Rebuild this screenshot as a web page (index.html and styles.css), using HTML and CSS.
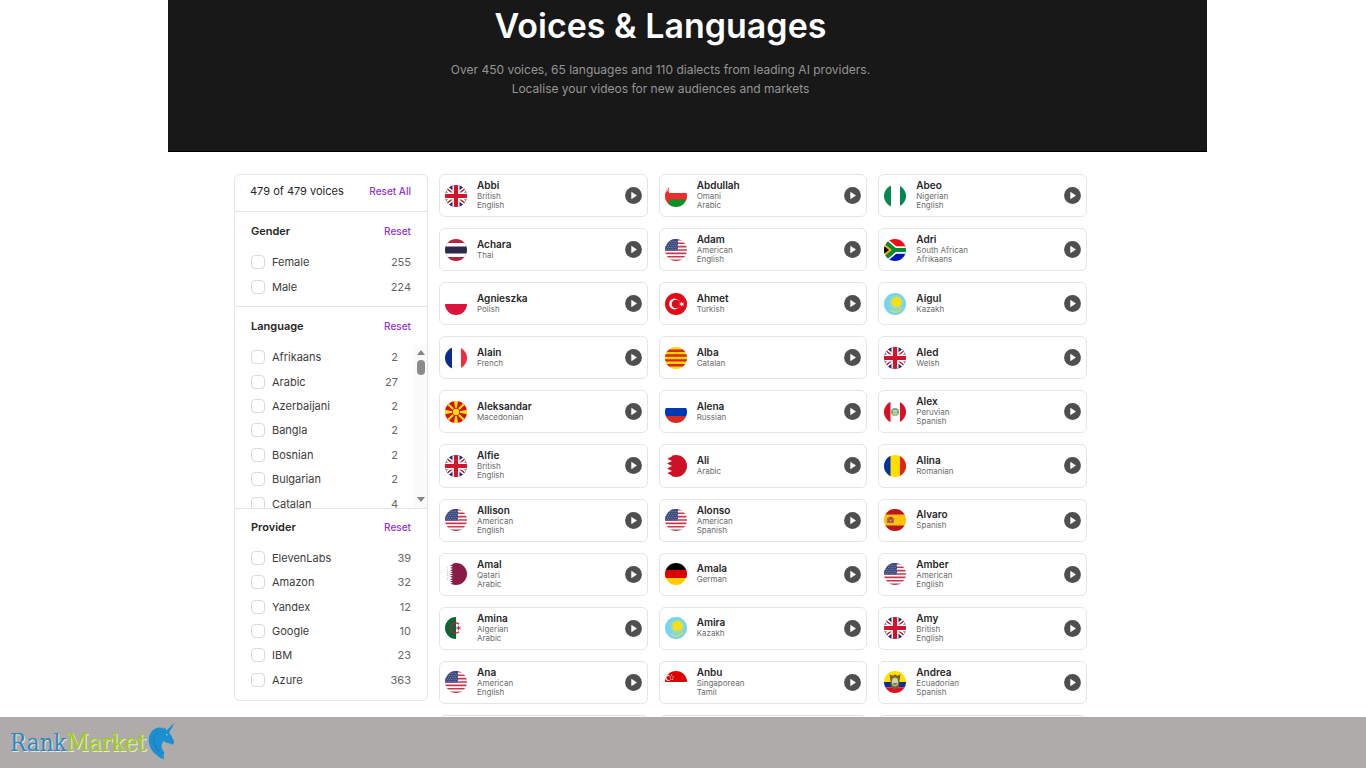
FILE: index.html
```html
<!DOCTYPE html>
<html lang="en">
<head>
<meta charset="utf-8">
<title>Voices &amp; Languages</title>
<link rel="stylesheet" href="styles.css">
</head>
<body>
<svg class="sprite" aria-hidden="true">
  <symbol id="play" viewBox="0 0 17 17"><circle cx="8.500" cy="8.500" r="8.400" fill="#4f4f4f"/><path d="M6.600 5.300v6.400l4.900-3.200z" fill="#fff" stroke="#fff" stroke-width=".6" stroke-linejoin="round"/></symbol>
  <symbol id="gb" viewBox="0 0 22 22"><path fill="#1b2c6b" d="M0 0h22v22H0z"/><path d="M-4 -1 26 23M26 -1-4 23" stroke="#fff" stroke-width="4.600"/><path d="M-4 -1 26 23M26 -1-4 23" stroke="#cf142b" stroke-width="1.400"/><path d="M11 0v22M0 11h22" stroke="#fff" stroke-width="7"/><path d="M11 0v22M0 11h22" stroke="#cf142b" stroke-width="4.200"/></symbol>
  <symbol id="us" viewBox="0 0 22 22"><path fill="#fff" d="M0 0h22v22H0z"/><path d="M0 .8h22M0 4.200h22M0 7.600h22M0 11h22M0 14.400h22M0 17.800h22M0 21.200h22" stroke="#c8394c" stroke-width="1.600"/><path fill="#3c4b80" d="M0 0h13v11.500H0z"/><path d="M1 2.500h12M2 4.500h11M1 6.500h12M2 8.500h11M1 10.300h12" stroke="#a9b2cf" stroke-width=".7" stroke-dasharray=".8 1.400"/></symbol>
  <symbol id="om" viewBox="0 0 22 22"><path fill="#fff" d="M0 0h22v8H0z"/><path fill="#ef2b2d" d="M0 0h4v8h18v7H0z"/><path fill="#0b9226" d="M4 14.500h18V22H4z"/><path fill="#ef2b2d" d="M0 14h4v8H0z"/><path d="M1.500 4l2 2.500m0-2.500l-2 2.500" stroke="#fff" stroke-width=".8"/></symbol>
  <symbol id="ng" viewBox="0 0 22 22"><path fill="#fff" d="M0 0h22v22H0z"/><path fill="#008850" d="M0 0h7v22H0zM16 0h6v22h-6z"/></symbol>
  <symbol id="th" viewBox="0 0 22 22"><path fill="#b52540" d="M0 0h22v22H0z"/><path fill="#fff" d="M0 4h22v14H0z"/><path fill="#2d2a4a" d="M0 7.500h22v7H0z"/></symbol>
  <symbol id="za" viewBox="0 0 22 22"><path fill="#f00c14" d="M0 0h22v11H0z"/><path fill="#0018b8" d="M0 11h22v11H0z"/><path d="M-1 1 11 11h12M-1 21l12-10" fill="none" stroke="#fff" stroke-width="7.400"/><path fill="#ffb612" d="M0 4l8.500 7L0 18z"/><path d="M-1 1 11 11h12M-1 21l12-10" fill="none" stroke="#078930" stroke-width="4.200"/><path fill="#000" d="M0 7l5 4-5 4z"/></symbol>
  <symbol id="pl" viewBox="0 0 22 22"><path fill="#fff" d="M0 0h22v11H0z"/><path fill="#dc143c" d="M0 11h22v11H0z"/></symbol>
  <symbol id="tr" viewBox="0 0 22 22"><path fill="#e30a17" d="M0 0h22v22H0z"/><circle cx="9.500" cy="11" r="5.400" fill="#fff"/><circle cx="10.900" cy="11" r="4.300" fill="#e30a17"/><path fill="#fff" d="M14 11l1.800-.7.100-1.900 1.300 1.500 1.900-.5-1 1.600 1 1.600-1.900-.4-1.300 1.400-.1-1.900z"/></symbol>
  <symbol id="kz" viewBox="0 0 22 22"><path fill="#76d3f1" d="M0 0h22v22H0z"/><circle cx="12.500" cy="9.500" r="7" fill="#b3e08d" opacity=".6"/><path d="M6 17c4 3 9 2.500 12-2" stroke="#c4dd6b" stroke-width="2" fill="none"/><circle cx="12.500" cy="9" r="5" fill="#f8df10"/></symbol>
  <symbol id="fr" viewBox="0 0 22 22"><path fill="#fff" d="M0 0h22v22H0z"/><path fill="#0a2c8b" d="M0 0h7v22H0z"/><path fill="#f02c3c" d="M16 0h6v22h-6z"/></symbol>
  <symbol id="ct" viewBox="0 0 22 22"><path fill="#ffd500" d="M0 0h22v22H0z"/><path d="M0 3.700h22M0 8.500h22M0 13.400h22M0 18.300h22" stroke="#da251d" stroke-width="2.400"/></symbol>
  <symbol id="mk" viewBox="0 0 22 22"><path fill="#d8100b" d="M0 0h22v22H0z"/><path fill="#ffde12" d="M8.800 0h4.400L11 11zM8.800 22h4.400L11 11zM0 8.800v4.400L11 11zM22 8.800v4.400L11 11z"/><path d="M3 3l16 16M19 3 3 19" stroke="#ffde12" stroke-width="2.200"/><circle cx="11" cy="11" r="4" fill="#d8100b"/><circle cx="11" cy="11" r="3.200" fill="#ffde12"/></symbol>
  <symbol id="ru" viewBox="0 0 22 22"><path fill="#fff" d="M0 0h22v7H0z"/><path fill="#0039b5" d="M0 7h22v8H0z"/><path fill="#d52b1e" d="M0 15h22v7H0z"/></symbol>
  <symbol id="pe" viewBox="0 0 22 22"><path fill="#fff" d="M0 0h22v22H0z"/><path fill="#d91023" d="M0 0h6.500v22H0zM16 0h6v22h-6z"/><circle cx="11" cy="11" r="4" fill="#78a978"/><path fill="#d8c66d" d="M8 12h6l-2 2.500h-2z"/><path fill="#a5d7da" d="M9 9h4v2.500H9z"/></symbol>
  <symbol id="bh" viewBox="0 0 22 22"><path fill="#fff" d="M0 0h22v22H0z"/><path fill="#ce1126" d="M5 0h17v22H5l2-1.500-5-2.300L7 16l-5-2.500L7 11 2 8.600 7 6 2 3.700 7 1.500z"/></symbol>
  <symbol id="ro" viewBox="0 0 22 22"><path fill="#ffde00" d="M0 0h22v22H0z"/><path fill="#0033a4" d="M0 0h6.500v22H0z"/><path fill="#df2418" d="M16 0h6v22h-6z"/></symbol>
  <symbol id="es" viewBox="0 0 22 22"><path fill="#fcbf0c" d="M0 0h22v22H0z"/><path fill="#b91420" d="M0 0h22v5.500H0zM0 16.500h22V22H0z"/><path fill="#b86d38" d="M3 9h7v5H3z"/><circle cx="6.500" cy="11.500" r="2.200" fill="#a4483a"/><path d="M4.500 8.500h4" stroke="#ad3a20"/><circle cx="6.500" cy="11.600" r="1" fill="#d7a3a0"/></symbol>
  <symbol id="qa" viewBox="0 0 22 22"><path fill="#fff" d="M0 0h22v22H0z"/><path fill="#8a1b46" d="M8 0h14v22H8L5 21l3-1.200-3-1.200 3-1.200-3-1.200 3-1.200-3-1.200 3-1.200-3-1.200 3-1.200-3-1.200L8 8.500 5 7.300 8 6.100 5 4.900 8 3.700 5 2.500 8 1.300z"/><path d="M2.500 4v14" stroke="#d9c3cc" stroke-width="1" stroke-dasharray="1 1"/></symbol>
  <symbol id="de" viewBox="0 0 22 22"><path d="M0 0h22v7H0z"/><path fill="#dd0000" d="M0 7h22v8H0z"/><path fill="#ffce00" d="M0 15h22v7H0z"/></symbol>
  <symbol id="dz" viewBox="0 0 22 22"><path fill="#fff" d="M0 0h22v22H0z"/><path fill="#046835" d="M0 0h11v22H0z"/><path d="M14 7.200a5 5 0 1 0 0 7.600" fill="none" stroke="#d21034" stroke-width="1.300"/><path d="M11 11h5M13.500 8.800v4.400M12 9.500l3 3m0-3l-3 3" stroke="#d21034" stroke-width=".8"/></symbol>
  <symbol id="sg" viewBox="0 0 22 22"><path fill="#fff" d="M0 0h22v22H0z"/><path fill="#df0000" d="M0 0h22v11H0z"/><path d="M4.500 4.500a2.600 2.600 0 1 0 0 4.800" fill="none" stroke="#fff" stroke-width="1.200"/><path d="M6 4h1.200M4.700 6h1.200M7.400 6h1.200M5.200 8.200h1.200M7 8.200h1.200" stroke="#fff"/></symbol>
  <symbol id="ec" viewBox="0 0 22 22"><path fill="#ffe000" d="M0 0h22v11H0z"/><path fill="#0f2c91" d="M0 11h22v5.500H0z"/><path fill="#e01020" d="M0 16.500h22V22H0z"/><path d="M5.500 3.500 9 4.800l2-1.600 2 1.600 3.500-1.300-1 6-.5 6.500-4 2.500-4-2.500-.5-6.500z" fill="#76603a"/><ellipse cx="11" cy="11" rx="3.200" ry="4.400" fill="#e0c35a"/><ellipse cx="11" cy="11" rx="2.500" ry="3.600" fill="#b5dbe0"/><path fill="#6c8b45" d="M8.700 12h4.600l-1 2.200H9.800z"/><circle cx="11" cy="9" r="1" fill="#f5d64e"/></symbol>
</svg>
<main class="page">
  <header class="hero">
    <h1>Voices &amp; Languages</h1>
    <p>Over 450 voices, 65 languages and 110 dialects from leading AI providers.<br>Localise your videos for new audiences and markets</p>
  </header>
  <div class="content">
    <aside class="filters">
      <div class="summary"><span>479 of 479 voices</span><button class="reset">Reset All</button></div>
      <section class="group">
        <div class="group-head"><h2>Gender</h2><button class="reset">Reset</button></div>
        <ul class="options two">
          <li><label><input type="checkbox">Female</label><span>255</span></li>
          <li><label><input type="checkbox">Male</label><span>224</span></li>
        </ul>
      </section>
      <section class="group languages">
        <div class="group-head"><h2>Language</h2><button class="reset">Reset</button></div>
        <div class="scroller">
          <ul class="options seven">
            <li><label><input type="checkbox">Afrikaans</label><span>2</span></li>
            <li><label><input type="checkbox">Arabic</label><span>27</span></li>
            <li><label><input type="checkbox">Azerbaijani</label><span>2</span></li>
            <li><label><input type="checkbox">Bangla</label><span>2</span></li>
            <li><label><input type="checkbox">Bosnian</label><span>2</span></li>
            <li><label><input type="checkbox">Bulgarian</label><span>2</span></li>
            <li><label><input type="checkbox">Catalan</label><span>4</span></li>
          </ul>
          <div class="scrollbar" aria-hidden="true">
            <svg width="8" height="5" viewBox="0 0 8 5"><path fill="#858585" d="M4 0l4 5H0z"/></svg>
            <div class="thumb"></div>
            <svg width="8" height="5" viewBox="0 0 8 5"><path fill="#858585" d="M4 5l4-5H0z"/></svg>
          </div>
        </div>
      </section>
      <section class="group providers">
        <div class="group-head"><h2>Provider</h2><button class="reset">Reset</button></div>
        <ul class="options six">
          <li><label><input type="checkbox">ElevenLabs</label><span>39</span></li>
          <li><label><input type="checkbox">Amazon</label><span>32</span></li>
          <li><label><input type="checkbox">Yandex</label><span>12</span></li>
          <li><label><input type="checkbox">Google</label><span>10</span></li>
          <li><label><input type="checkbox">IBM</label><span>23</span></li>
          <li><label><input type="checkbox">Azure</label><span>363</span></li>
        </ul>
      </section>
    </aside>
    <ul class="voices">
      <li class="voice"><svg class="flag"><use href="#gb"/></svg><div class="info"><h3>Abbi</h3><p>British</p><p>English</p></div><button class="play" aria-label="Play Abbi"><svg><use href="#play"/></svg></button></li>
      <li class="voice"><svg class="flag"><use href="#om"/></svg><div class="info"><h3>Abdullah</h3><p>Omani</p><p>Arabic</p></div><button class="play" aria-label="Play Abdullah"><svg><use href="#play"/></svg></button></li>
      <li class="voice"><svg class="flag"><use href="#ng"/></svg><div class="info"><h3>Abeo</h3><p>Nigerian</p><p>English</p></div><button class="play" aria-label="Play Abeo"><svg><use href="#play"/></svg></button></li>
      <li class="voice"><svg class="flag"><use href="#th"/></svg><div class="info"><h3>Achara</h3><p>Thai</p></div><button class="play" aria-label="Play Achara"><svg><use href="#play"/></svg></button></li>
      <li class="voice"><svg class="flag"><use href="#us"/></svg><div class="info"><h3>Adam</h3><p>American</p><p>English</p></div><button class="play" aria-label="Play Adam"><svg><use href="#play"/></svg></button></li>
      <li class="voice"><svg class="flag"><use href="#za"/></svg><div class="info"><h3>Adri</h3><p>South African</p><p>Afrikaans</p></div><button class="play" aria-label="Play Adri"><svg><use href="#play"/></svg></button></li>
      <li class="voice"><svg class="flag"><use href="#pl"/></svg><div class="info"><h3>Agnieszka</h3><p>Polish</p></div><button class="play" aria-label="Play Agnieszka"><svg><use href="#play"/></svg></button></li>
      <li class="voice"><svg class="flag"><use href="#tr"/></svg><div class="info"><h3>Ahmet</h3><p>Turkish</p></div><button class="play" aria-label="Play Ahmet"><svg><use href="#play"/></svg></button></li>
      <li class="voice"><svg class="flag"><use href="#kz"/></svg><div class="info"><h3>Aigul</h3><p>Kazakh</p></div><button class="play" aria-label="Play Aigul"><svg><use href="#play"/></svg></button></li>
      <li class="voice"><svg class="flag"><use href="#fr"/></svg><div class="info"><h3>Alain</h3><p>French</p></div><button class="play" aria-label="Play Alain"><svg><use href="#play"/></svg></button></li>
      <li class="voice"><svg class="flag"><use href="#ct"/></svg><div class="info"><h3>Alba</h3><p>Catalan</p></div><button class="play" aria-label="Play Alba"><svg><use href="#play"/></svg></button></li>
      <li class="voice"><svg class="flag"><use href="#gb"/></svg><div class="info"><h3>Aled</h3><p>Welsh</p></div><button class="play" aria-label="Play Aled"><svg><use href="#play"/></svg></button></li>
      <li class="voice"><svg class="flag"><use href="#mk"/></svg><div class="info"><h3>Aleksandar</h3><p>Macedonian</p></div><button class="play" aria-label="Play Aleksandar"><svg><use href="#play"/></svg></button></li>
      <li class="voice"><svg class="flag"><use href="#ru"/></svg><div class="info"><h3>Alena</h3><p>Russian</p></div><button class="play" aria-label="Play Alena"><svg><use href="#play"/></svg></button></li>
      <li class="voice"><svg class="flag"><use href="#pe"/></svg><div class="info"><h3>Alex</h3><p>Peruvian</p><p>Spanish</p></div><button class="play" aria-label="Play Alex"><svg><use href="#play"/></svg></button></li>
      <li class="voice"><svg class="flag"><use href="#gb"/></svg><div class="info"><h3>Alfie</h3><p>British</p><p>English</p></div><button class="play" aria-label="Play Alfie"><svg><use href="#play"/></svg></button></li>
      <li class="voice"><svg class="flag"><use href="#bh"/></svg><div class="info"><h3>Ali</h3><p>Arabic</p></div><button class="play" aria-label="Play Ali"><svg><use href="#play"/></svg></button></li>
      <li class="voice"><svg class="flag"><use href="#ro"/></svg><div class="info"><h3>Alina</h3><p>Romanian</p></div><button class="play" aria-label="Play Alina"><svg><use href="#play"/></svg></button></li>
      <li class="voice"><svg class="flag"><use href="#us"/></svg><div class="info"><h3>Allison</h3><p>American</p><p>English</p></div><button class="play" aria-label="Play Allison"><svg><use href="#play"/></svg></button></li>
      <li class="voice"><svg class="flag"><use href="#us"/></svg><div class="info"><h3>Alonso</h3><p>American</p><p>Spanish</p></div><button class="play" aria-label="Play Alonso"><svg><use href="#play"/></svg></button></li>
      <li class="voice"><svg class="flag"><use href="#es"/></svg><div class="info"><h3>Alvaro</h3><p>Spanish</p></div><button class="play" aria-label="Play Alvaro"><svg><use href="#play"/></svg></button></li>
      <li class="voice"><svg class="flag"><use href="#qa"/></svg><div class="info"><h3>Amal</h3><p>Qatari</p><p>Arabic</p></div><button class="play" aria-label="Play Amal"><svg><use href="#play"/></svg></button></li>
      <li class="voice"><svg class="flag"><use href="#de"/></svg><div class="info"><h3>Amala</h3><p>German</p></div><button class="play" aria-label="Play Amala"><svg><use href="#play"/></svg></button></li>
      <li class="voice"><svg class="flag"><use href="#us"/></svg><div class="info"><h3>Amber</h3><p>American</p><p>English</p></div><button class="play" aria-label="Play Amber"><svg><use href="#play"/></svg></button></li>
      <li class="voice"><svg class="flag"><use href="#dz"/></svg><div class="info"><h3>Amina</h3><p>Algerian</p><p>Arabic</p></div><button class="play" aria-label="Play Amina"><svg><use href="#play"/></svg></button></li>
      <li class="voice"><svg class="flag"><use href="#kz"/></svg><div class="info"><h3>Amira</h3><p>Kazakh</p></div><button class="play" aria-label="Play Amira"><svg><use href="#play"/></svg></button></li>
      <li class="voice"><svg class="flag"><use href="#gb"/></svg><div class="info"><h3>Amy</h3><p>British</p><p>English</p></div><button class="play" aria-label="Play Amy"><svg><use href="#play"/></svg></button></li>
      <li class="voice"><svg class="flag"><use href="#us"/></svg><div class="info"><h3>Ana</h3><p>American</p><p>English</p></div><button class="play" aria-label="Play Ana"><svg><use href="#play"/></svg></button></li>
      <li class="voice"><svg class="flag"><use href="#sg"/></svg><div class="info"><h3>Anbu</h3><p>Singaporean</p><p>Tamil</p></div><button class="play" aria-label="Play Anbu"><svg><use href="#play"/></svg></button></li>
      <li class="voice"><svg class="flag"><use href="#ec"/></svg><div class="info"><h3>Andrea</h3><p>Ecuadorian</p><p>Spanish</p></div><button class="play" aria-label="Play Andrea"><svg><use href="#play"/></svg></button></li>
      <li class="voice"></li>
      <li class="voice"></li>
      <li class="voice"></li>
    </ul>
  </div>
</main>
<footer class="brand-bar">
  <a class="brand" href="#"><span class="rank">Rank</span><span class="market">Market</span><svg class="unicorn" viewBox="430 32 90 123" aria-hidden="true"><path fill="#1b8fd0" d="M514 37 497 68Q505 77 509 88Q515 96 510 102Q505 107 499 101Q488 99 481 94Q472 100 474 114Q476 123 482 128Q478 138 482 150Q470 149 461 139Q441 124 436 104Q431 84 439 71Q447 55 465 52Q473 51 480 56L484 52 488 61z"/><path d="M462 67Q447 78 450 96Q453 115 466 126" fill="none" stroke="#1879bb" stroke-width="3"/><circle cx="490" cy="74" r="2" fill="#d5e5ee"/></svg></a>
</footer>
</body>
</html>
```
FILE: styles.css
```css
* { box-sizing: border-box; margin: 0; padding: 0; }

body {
  display: flex;
  flex-direction: column;
  height: 100vh;
  overflow: hidden;
  background: #fff;
  color: #262626;
  font-family: Inter, "Liberation Sans", sans-serif;
  font-size: 11px;
}

ul { list-style: none; }
button { border: 0; background: none; font: inherit; cursor: pointer; }
.sprite { display: none; }

.page {
  flex: 1;
  min-height: 0;
  overflow: hidden;
  margin: 0 159px 0 168px;
}

.hero {
  padding: 4px 54px 53px 0;
  border-bottom: 1px solid #000;
  background: #181818;
  text-align: center;
}
.hero h1 { color: #fff; font-size: 34px; font-weight: 600; line-height: 44px; }
.hero p { margin-top: 12px; color: #959595; font-size: 12px; line-height: 19px; }

.content {
  display: flex;
  align-items: flex-start;
  gap: 11px;
  padding: 22px 120px 0 66px;
}

.filters {
  flex: 0 0 194px;
  border: 1px solid #e5e5e5;
  border-radius: 6px;
}
.summary {
  display: flex;
  justify-content: space-between;
  align-items: center;
  padding: 8px 16px 12px 15px;
  line-height: 16px;
}
.reset { color: #9333d6; font-size: 10px; font-weight: 500; line-height: 14px; }
.group { padding: 12px 0 7px; border-top: 1px solid #e5e5e5; }
.group-head {
  display: flex;
  justify-content: space-between;
  align-items: center;
  margin-bottom: 12px;
  padding: 0 16px;
  line-height: 14px;
}
.group-head h2 { font-size: 11px; font-weight: 600; }

.options { display: grid; flex: 1; padding: 0 16px; }
.options li { display: flex; justify-content: space-between; align-items: center; color: #666; }
.options label { display: flex; align-items: center; gap: 7px; color: #3c3c3c; }
.options input {
  appearance: none;
  width: 14px;
  height: 14px;
  border: 1px solid #dadada;
  border-radius: 4px;
  background: #fff;
}
.two { min-height: 49px; }
.six { min-height: 146px; }
.seven { min-height: 171px; }

.languages { padding-bottom: 0; }
.providers { padding: 11px 0 8px; }
.scroller { display: flex; height: 163px; overflow: hidden; }
.scrollbar {
  display: flex;
  flex-direction: column;
  align-items: center;
  width: 13px;
  height: 163px;
  padding: 5px 0 6px;
  background: #fafafa;
}
.thumb { width: 8px; height: 15px; margin: 5px 0 auto; border-radius: 4px; background: #8b8b8b; }

.voices {
  display: grid;
  flex: 1;
  grid-template-columns: repeat(3, 1fr);
  gap: 11px;
  min-height: 584px;
}
.voice {
  display: flex;
  align-items: center;
  min-height: 43px;
  padding: 0 5px;
  border: 1px solid #e5e5e5;
  border-radius: 6px;
}
.flag { width: 22px; height: 22px; border-radius: 50%; }
.info { flex: 1; padding: 0 0 2px 10px; }
.info h3 { font-size: 10px; font-weight: 600; line-height: 13px; }
.info p { color: #6b6b6b; font-size: 8px; line-height: 9px; }
.play, .play svg { display: block; width: 17px; height: 17px; }

.brand-bar { padding: 4px 10px 3px; background: #afabaa; }
.brand {
  display: flex;
  align-items: flex-start;
  width: max-content;
  font-family: "DejaVu Serif Condensed", "DejaVu Serif", serif;
  font-size: 24px;
  line-height: 44px;
  text-decoration: none;
  text-shadow: 1px 1px 0 #e8e8e8;
}
.rank { color: #2d87bd; }
.market { color: #9fce0c; }
.unicorn { width: 30px; height: 40px; }
```
